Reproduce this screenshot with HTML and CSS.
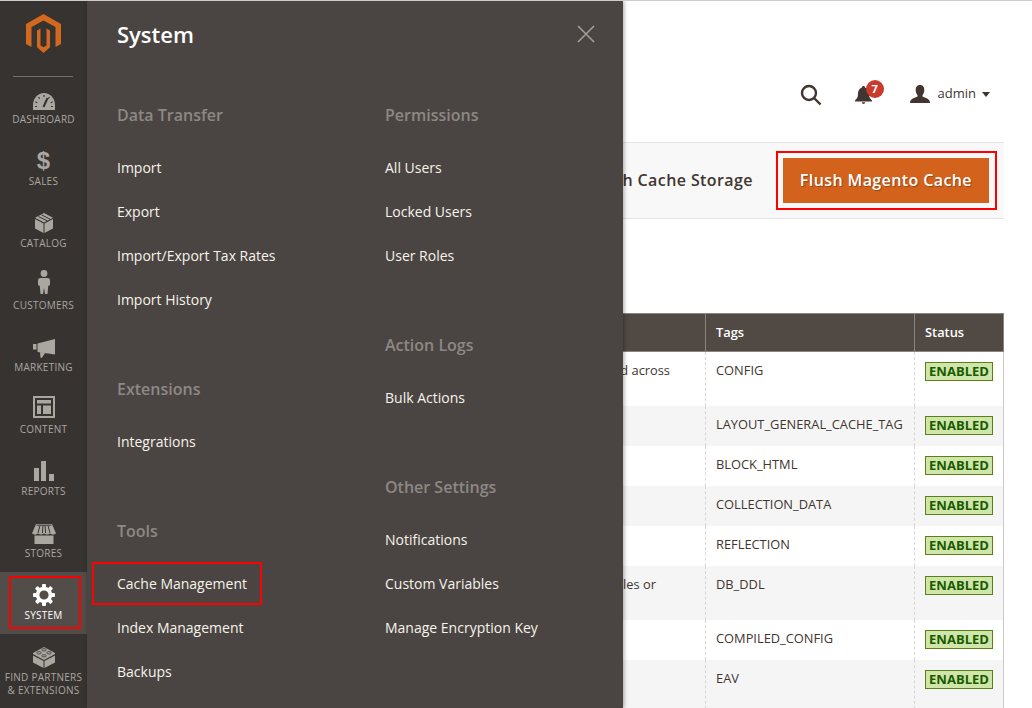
FILE: index.html
```html
<!DOCTYPE html>
<html>
<head>
	<meta charset="utf-8">
	<title>Cache Management</title>
	<link rel="stylesheet" href="styles.css">
</head>
<body>
	<nav class="sidebar">
		<div class="logo">
			<svg width="35" height="39" viewBox="0 0 35 39"><path fill="#d2691f" d="M17.5 0L35 10V30L29.5 33V13L17.5 6.5L5.5 13V33L0 30V10Z"/><path fill="#d2691f" d="M11 16.5L14.5 14.5V31.5L17.5 33.2L20.5 31.5V14.5L24 16.5V33.2L17.5 39L11 33.2Z"/></svg>
		</div>
		<div class="nav-sep"></div>
		<a class="nav-item">
			<span class="nav-icon"><svg class="down-1" width="22" height="17" viewBox="0 0 22 17"><path class="ico" d="M0 17V12C0 5 5 0 11 0S22 5 22 12V17Z"/><path class="cut" d="M11 2V4M5.5 4L6.7 5.6M16.5 4L15.3 5.6M2.4 9L4.3 9.6M19.6 9L17.7 9.6M2 13.5H4M18 13.5H20"/><path class="cut needle" d="M14.5 5L10.5 14"/></svg></span>
			<span class="nav-label">Dashboard</span>
		</a>
		<a class="nav-item">
			<span class="nav-icon"><span class="dollar">$</span></span>
			<span class="nav-label">Sales</span>
		</a>
		<a class="nav-item">
			<span class="nav-icon"><svg class="up-1" width="18" height="20" viewBox="0 0 18 20"><path class="ico" d="M0 6L8.5 10.5V20L0 15.5ZM9.5 10.5L18 6V15.5L9.5 20ZM0 4.8L9 0L18 4.8L9 9.5Z"/><path class="cut thin" d="M3.5 3.5L12.5 8M6.5 1.8L15.5 6.4"/></svg></span>
			<span class="nav-label">Catalog</span>
		</a>
		<a class="nav-item">
			<span class="nav-icon"><svg class="up-4" width="12" height="24" viewBox="0 0 12 24"><circle class="ico" cx="6" cy="3.5" r="3.4"/><path class="ico" d="M2.5 8H9.5Q12 8 12 10.5V15L10.2 16L9.5 24H7L6 18L5 24H2.5L1.8 16L0 15V10.5Q0 8 2.5 8Z"/></svg></span>
			<span class="nav-label">Customers</span>
		</a>
		<a class="nav-item">
			<span class="nav-icon"><svg width="22" height="19" viewBox="0 0 22 19"><path class="ico" d="M0 5H3.5V10.5H0ZM4.5 4.5L22 0V15.5L4.5 13ZM7 13.5L12 14L9 18.7H7.5Z"/></svg></span>
			<span class="nav-label">Marketing</span>
		</a>
		<a class="nav-item">
			<span class="nav-icon"><svg class="up-3" width="22" height="22" viewBox="0 0 22 22"><path class="ico" d="M0 0H22V22H0ZM2 2V20H20V2Z" fill-rule="evenodd"/><path class="ico" d="M4 4H18V7.5H4ZM4 9.5H8V18H4ZM10 9.5H18V18H10Z"/></svg></span>
			<span class="nav-label">Content</span>
		</a>
		<a class="nav-item">
			<span class="nav-icon"><svg class="up-1" width="20" height="20" viewBox="0 0 20 20"><path class="ico" d="M0 7H5V20H0ZM7 0H12V20H7ZM15 13H20V20H15Z"/></svg></span>
			<span class="nav-label">Reports</span>
		</a>
		<a class="nav-item">
			<span class="nav-icon"><svg width="24" height="20" viewBox="0 0 24 20"><path class="ico" d="M4 0H20L24 9.5C22 11 20 10.8 18 9.5C16 11 14 10.8 12 9.5C10 11 8 10.8 6 9.5C4 11 2 11 0 9.5ZM2.5 11.5H21.5V20H2.5Z"/><path class="cut thin" d="M8 1.5L6 9M11 1.5L10.4 9M13 1.5L13.6 9M16 1.5L18 9M4.6 1.2H19.4"/></svg></span>
			<span class="nav-label">Stores</span>
		</a>
		<a class="nav-item active">
			<span class="nav-icon"><svg class="up-1" width="22" height="22" viewBox="0 0 22 22">
				<circle class="gear-ring" cx="11" cy="11" r="6.4"/>
				<g class="ico">
					<rect x="9" y="0" width="4" height="5" rx="1"/>
					<rect x="9" y="0" width="4" height="5" rx="1" transform="rotate(45 11 11)"/>
					<rect x="9" y="0" width="4" height="5" rx="1" transform="rotate(90 11 11)"/>
					<rect x="9" y="0" width="4" height="5" rx="1" transform="rotate(135 11 11)"/>
					<rect x="9" y="0" width="4" height="5" rx="1" transform="rotate(180 11 11)"/>
					<rect x="9" y="0" width="4" height="5" rx="1" transform="rotate(225 11 11)"/>
					<rect x="9" y="0" width="4" height="5" rx="1" transform="rotate(270 11 11)"/>
					<rect x="9" y="0" width="4" height="5" rx="1" transform="rotate(315 11 11)"/>
				</g>
			</svg></span>
			<span class="nav-label">System</span>
		</a>
		<a class="nav-item nav-two-line">
			<span class="nav-icon"><svg class="up-1" width="22" height="22" viewBox="0 0 22 22"><path class="ico" d="M11 1L22 7V8L11 14L0 8V7ZM0 9.5L10.5 15V22L0 16.5ZM11.5 15L22 9.5V16.5L11.5 22Z"/><ellipse class="stud" cx="11" cy="3.8" rx="2.2" ry="1.2"/><ellipse class="stud" cx="6" cy="6.8" rx="2.2" ry="1.2"/><ellipse class="stud" cx="16" cy="6.8" rx="2.2" ry="1.2"/><ellipse class="stud" cx="11" cy="9.8" rx="2.2" ry="1.2"/></svg></span>
			<span class="nav-label">Find Partners<br>&amp; Extensions</span>
		</a>
	</nav>

	<div class="panel">
		<div class="panel-head">
			<h2 class="panel-title">System</h2>
			<svg class="panel-close" width="18" height="18" viewBox="0 0 18 18"><path d="M1 1L17 17M17 1L1 17"/></svg>
		</div>
		<div class="panel-cols">
			<div class="panel-col">
				<div class="menu-group">
					<h3>Data Transfer</h3>
					<ul>
						<li><a>Import</a></li>
						<li><a>Export</a></li>
						<li><a>Import/Export Tax Rates</a></li>
						<li><a>Import History</a></li>
					</ul>
				</div>
				<div class="menu-group">
					<h3>Extensions</h3>
					<ul>
						<li><a>Integrations</a></li>
					</ul>
				</div>
				<div class="menu-group">
					<h3>Tools</h3>
					<ul>
						<li><a class="marked">Cache Management</a></li>
						<li><a>Index Management</a></li>
						<li><a>Backups</a></li>
					</ul>
				</div>
			</div>
			<div class="panel-col">
				<div class="menu-group">
					<h3>Permissions</h3>
					<ul>
						<li><a>All Users</a></li>
						<li><a>Locked Users</a></li>
						<li><a>User Roles</a></li>
					</ul>
				</div>
				<div class="menu-group">
					<h3>Action Logs</h3>
					<ul>
						<li><a>Bulk Actions</a></li>
					</ul>
				</div>
				<div class="menu-group">
					<h3>Other Settings</h3>
					<ul>
						<li><a>Notifications</a></li>
						<li><a>Custom Variables</a></li>
						<li><a>Manage Encryption Key</a></li>
					</ul>
				</div>
			</div>
		</div>
	</div>

	<main class="content">
		<header class="top-bar">
			<svg class="search-icon" width="22" height="22" viewBox="0 0 22 22"><circle cx="9" cy="9" r="7"/><path d="M14 14L20.5 20.5"/></svg>
			<div class="bell">
				<svg width="17" height="18" viewBox="0 0 17 18"><path d="M8.5 0C9.5 0 10 .7 10 1.5C13 2.3 14 5 14 8C14 11 15 12.5 17 14.5V15.5H0V14.5C2 12.5 3 11 3 8C3 5 4 2.3 7 1.5C7 .7 7.5 0 8.5 0ZM6.8 16.3H10.2C10 17.4 9.4 18 8.5 18C7.6 18 7 17.4 6.8 16.3Z"/></svg>
				<span class="bell-count">7</span>
			</div>
			<div class="user">
				<svg width="20" height="18" viewBox="0 0 20 18"><path d="M10 0C13 0 14.3 2.2 14.3 5C14.3 7.5 13.4 9 12.5 10.2V11.6C15 13 20 13.5 20 18H0C0 13.5 5 13 7.5 11.6V10.2C6.6 9 5.7 7.5 5.7 5C5.7 2.2 7 0 10 0Z"/></svg>
				<span class="user-name">admin</span>
				<span class="caret"></span>
			</div>
		</header>

		<div class="actions">
			<button class="btn-plain">Flush Cache Storage</button>
			<button class="btn-primary">Flush Magento Cache</button>
		</div>

		<table class="cache-grid">
			<colgroup>
				<col class="col-desc"><col class="col-tags"><col class="col-status">
			</colgroup>
			<thead>
				<tr><th></th><th>Tags</th><th>Status</th></tr>
			</thead>
			<tbody>
				<tr class="row-tall"><td class="desc-config">Various XML configurations that were collected across</td><td>CONFIG</td><td class="status-cell"><span class="badge">ENABLED</span></td></tr>
				<tr><td></td><td>LAYOUT_GENERAL_CACHE_TAG</td><td class="status-cell"><span class="badge">ENABLED</span></td></tr>
				<tr><td></td><td>BLOCK_HTML</td><td class="status-cell"><span class="badge">ENABLED</span></td></tr>
				<tr><td></td><td>COLLECTION_DATA</td><td class="status-cell"><span class="badge">ENABLED</span></td></tr>
				<tr><td></td><td>REFLECTION</td><td class="status-cell"><span class="badge">ENABLED</span></td></tr>
				<tr class="row-tall"><td class="desc-ddl">describing tables or</td><td>DB_DDL</td><td class="status-cell"><span class="badge">ENABLED</span></td></tr>
				<tr><td></td><td>COMPILED_CONFIG</td><td class="status-cell"><span class="badge">ENABLED</span></td></tr>
				<tr class="row-tall"><td></td><td>EAV</td><td class="status-cell"><span class="badge">ENABLED</span></td></tr>
			</tbody>
		</table>
	</main>
</body>
</html>
```

FILE: styles.css
```css
* {
	box-sizing: border-box;
}
html, body {
	margin: 0;
	height: 708px;
	overflow: hidden;
}
body {
	position: relative;
	display: flex;
	border-top: 1px solid #ccc;
	background-color: #fff;
	font-family: "Open Sans", sans-serif;
	color: #41362f;
}

/* left nav */
.sidebar {
	flex: none;
	width: 87px;
	overflow: hidden;
	background-color: #373330;
}
.logo {
	display: flex;
	justify-content: center;
	height: 75px;
	padding-top: 13px;
}
.nav-sep {
	height: 1px;
	margin: 0 14px -1px 13px;
	background-color: #736e6a;
}
.nav-item {
	position: relative;
	display: flex;
	flex-direction: column;
	align-items: center;
	height: 62px;
	padding-top: 11px;
	color: #aaa6a0;
}
.nav-icon {
	display: flex;
	flex: none;
	align-items: center;
	justify-content: center;
	height: 26px;
}
.down-1 { margin-top: 2px; }
.up-1 { margin-bottom: 2px; }
.up-3 { margin-bottom: 6px; }
.up-4 { margin-bottom: 8px; }
.nav-label {
	font-size: 10px;
	line-height: 13px;
	letter-spacing: .25px;
	text-align: center;
	text-transform: uppercase;
	white-space: nowrap;
}
.nav-two-line {
	height: 74px;
}
.nav-item.active {
	background-color: #524d49;
	color: #fff;
}
.nav-item.active::after {
	content: "";
	position: absolute;
	top: 4px;
	left: 9px;
	right: 6px;
	bottom: 5px;
	border: 2px solid #f00;
}
.ico {
	fill: #aaa6a0;
}
.active .ico {
	fill: #fff;
}
.cut {
	fill: none;
	stroke: #373330;
	stroke-width: 1.2;
}
.cut.thin {
	stroke-width: 1;
}
.cut.needle {
	stroke-width: 2;
}
.stud {
	fill: #aaa6a0;
	stroke: #373330;
	stroke-width: .8;
}
.gear-ring {
	fill: none;
	stroke: #fff;
	stroke-width: 3.6;
}
.dollar {
	margin-bottom: 2px;
	font-family: "Liberation Sans", sans-serif;
	font-size: 24px;
	font-weight: bold;
	line-height: 24px;
}

/* slide out menu */
.panel {
	position: absolute;
	top: 0;
	bottom: 0;
	left: 87px;
	z-index: 5;
	width: 536px;
	padding: 18px 0 0 30px;
	background-color: #4a4542;
	box-shadow: 1px 0 4px rgba(0,0,0,.35);
}
.panel-head {
	display: flex;
	justify-content: space-between;
	align-items: flex-start;
	padding-right: 28px;
}
.panel-title {
	margin: 0;
	font-size: 22px;
	font-weight: 600;
	line-height: 30px;
	color: #fff;
}
.panel-close {
	margin-top: 6px;
	fill: none;
	stroke: #a79d95;
	stroke-width: 1.6;
}
.panel-cols {
	display: flex;
	margin-top: 55px;
}
.panel-col {
	flex: none;
	width: 268px;
}
.menu-group {
	margin-bottom: 68px;
}
.menu-group:last-child {
	margin-bottom: 0;
}
.menu-group h3 {
	margin: 0 0 32px;
	font-size: 16px;
	font-weight: 600;
	line-height: 22px;
	color: #8d8883;
}
.menu-group ul {
	display: flex;
	flex-direction: column;
	gap: 24px;
	margin: 0;
	padding: 0;
	list-style: none;
}
.menu-group a {
	display: block;
	position: relative;
	width: fit-content;
	font-size: 14px;
	line-height: 20px;
	color: #f7f3eb;
}
.menu-group a.marked::after {
	content: "";
	position: absolute;
	top: -12px;
	left: -25px;
	right: -15px;
	bottom: -11px;
	border: 2px solid #f00;
}

/* page content */
.content {
	flex: 1;
	min-width: 0;
	padding: 0 28px 0 30px;
	overflow: hidden;
}
.top-bar {
	display: flex;
	justify-content: flex-end;
	align-items: center;
	height: 141px;
	padding: 79px 14px 32px 0;
}
.search-icon {
	fill: none;
	stroke: #41362f;
	stroke-width: 2.4;
}
.bell {
	position: relative;
	display: flex;
	margin-left: 33px;
}
.bell svg {
	fill: #41362f;
}
.bell-count {
	position: absolute;
	top: -6px;
	left: 11px;
	width: 18px;
	height: 18px;
	border-radius: 50%;
	background-color: #c93b2d;
	font-size: 11px;
	font-weight: 700;
	line-height: 18px;
	text-align: center;
	color: #fff;
}
.user {
	display: flex;
	align-items: center;
	margin-left: 38px;
	margin-bottom: 2px;
}
.user svg {
	fill: #41362f;
}
.user-name {
	margin-left: 8px;
	margin-bottom: 2px;
	font-size: 13px;
	color: #41362f;
}
.caret {
	width: 0;
	height: 0;
	margin-left: 6px;
	border-top: 5px solid #41362f;
	border-left: 4px solid transparent;
	border-right: 4px solid transparent;
}
.actions {
	display: flex;
	justify-content: flex-end;
	align-items: center;
	gap: 13px;
	height: 77px;
	padding-right: 15px;
	border-top: 1px solid #e3e3e3;
	border-bottom: 1px solid #e3e3e3;
	background-color: #f8f8f8;
}
.actions button {
	height: 45px;
	padding: 0 17px 2px;
	border: none;
	font-family: inherit;
	font-size: 16px;
	font-weight: 600;
	letter-spacing: .4px;
}
.btn-plain {
	background: none;
	color: #41362f;
}
.btn-primary {
	position: relative;
	background-color: #d2621c;
	color: #fff;
	text-shadow: 1px 1px 1px rgba(0,0,0,.3);
}
.btn-primary::after {
	content: "";
	position: absolute;
	top: -7px;
	left: -7px;
	right: -8px;
	bottom: -7px;
	border: 2px solid #f00;
}

/* grid */
.cache-grid {
	width: 887px;
	margin-top: 94px;
	table-layout: fixed;
	border-collapse: separate;
	border-spacing: 0;
	font-size: 12.85px;
	line-height: 18px;
}
.col-desc { width: 588px; }
.col-tags { width: 209px; }
.col-status { width: 90px; }
.cache-grid th {
	height: 39px;
	padding: 0 10px 2px;
	border-top: 1px solid #8a837f;
	border-bottom: 1px solid #8a837f;
	border-left: 1px solid #8a837f;
	background-color: #514943;
	font-weight: 600;
	text-align: left;
	color: #fff;
}
.cache-grid th:last-child {
	border-right: 1px solid #8a837f;
}
.cache-grid td {
	padding: 9px 10px;
	border-left: 1px dashed #d6d6d6;
	vertical-align: top;
	color: #41362f;
}
.cache-grid td:first-child {
	border-left: 1px solid #d6d6d6;
}
.cache-grid td.desc-config {
	padding-right: 35px;
	text-align: right;
}
.cache-grid td.desc-ddl {
	padding-right: 49px;
	text-align: right;
}
.cache-grid td.status-cell {
	padding: 10px 10px 8px;
	border-right: 1px solid #cacaca;
}
.cache-grid tbody tr:nth-child(even) td {
	background-color: #f5f5f5;
}
.row-tall td {
	height: 54px;
}
.badge {
	display: block;
	width: 68px;
	height: 19px;
	margin-bottom: 3px;
	border: 1px solid #5b8116;
	background-color: #d0e5a9;
	font-size: 13px;
	font-weight: 700;
	line-height: 17px;
	text-align: center;
	color: #185b00;
}
```
